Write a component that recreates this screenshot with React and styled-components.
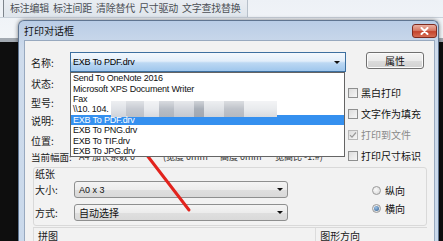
import React from "react"
import styled, { createGlobalStyle } from "styled-components"

const CJK = `"Noto Sans CJK SC", "Liberation Sans", sans-serif`
const LATIN = `"Liberation Sans", "Noto Sans CJK SC", sans-serif`

const GlobalStyle = createGlobalStyle`
  html, body { margin: 0; padding: 0; }
  body { font-family: ${CJK}; background: #0d0d0d; }
`

const Screen = styled.div`
  position: relative;
  width: 443px;
  height: 241px;
  overflow: hidden;
  display: flex;
  flex-direction: column;
  background: #0d0d0d;
`

// app window behind the dialog
const Ribbon = styled.div`
  display: flex;
  flex-direction: column;
  background: linear-gradient(#edf1f6, #f3f6f9);
`
const RibbonTop = styled.div`
  height: 17px;
  display: flex;
  border-bottom: 1px solid #c9d1da;
`
const RibbonGroup = styled.div`
  width: 237px;
  margin-left: 3px;
  padding-left: 6px;
  border-left: 1px solid #7d848c;
  border-right: 1px solid #b7c0ca;
  background: linear-gradient(#e9edf2, #dfe5ec);
  font-size: 10px;
  line-height: 15px;
  letter-spacing: -0.25px;
  word-spacing: 2px;
  color: #4b4f55;
  white-space: nowrap;
  overflow: hidden;
`
const RibbonFill = styled.div`
  height: 20px;
`
const RibbonBand = styled.div`
  height: 4px;
  background: #a3aab2;
`
const Canvas = styled.div`
  flex: 1;
  background: #0e0e0e;
`

// dialog window
const Dialog = styled.div`
  position: absolute;
  left: 18px;
  top: 20px;
  width: 421px;
  height: 221px;
  box-sizing: border-box;
  border: 1px solid #5f7591;
  border-bottom: 0;
  border-radius: 6px 6px 0 0;
  background: linear-gradient(#b9cde6, #cfdcec 30px, #cad9eb);
  display: flex;
  flex-direction: column;
  box-shadow: 0 0 4px rgba(0, 0, 0, 0.5);
`
const TitleBar = styled.div`
  height: 19px;
  display: flex;
  align-items: center;
  padding-left: 5px;
  padding-right: 1px;
  font-size: 10px;
  color: #111;
`
const CloseButton = styled.div`
  margin-left: auto;
  width: 25px;
  height: 14px;
  box-sizing: border-box;
  border: 1px solid #7e2a1f;
  border-radius: 3px;
  background: linear-gradient(#eab0a2, #d77a66 45%, #c4442d 55%, #d66e55);
  display: flex;
  align-items: center;
  justify-content: center;
`
const Frame = styled.div`
  flex: 1;
  min-height: 0;
  padding: 0 3px 0 5px;
  display: flex;
`
const Body = styled.div`
  flex: 1;
  border: 1px solid #98a9bf;
  border-bottom: 0;
  background: #f2f2f2;
  padding: 11px 0 0 6px;
  display: flex;
  flex-direction: column;
`

const TopSection = styled.div`
  display: flex;
  height: 114px;
  flex: none;
`
const LeftCol = styled.div`
  width: 315px;
  display: flex;
  flex-direction: column;
`
const RightCol = styled.div`
  margin-left: 2px;
  display: flex;
  flex-direction: column;
`
const FieldRow = styled.div`
  height: ${(p) => p.$h}px;
  display: flex;
  align-items: center;
  position: relative;
`
const Label = styled.div`
  width: ${(p) => p.$w || 39}px;
  flex: none;
  font-size: ${(p) => p.$size || 10}px;
  color: #1a1a1a;
  white-space: nowrap;
`

const NameCombo = styled.div`
  position: relative;
  width: 276px;
  height: 20px;
  box-sizing: border-box;
  border: 1px solid #3c6f9f;
  background: linear-gradient(#f3f8fd, #e2eefa 45%, #bcd8f3 55%, #9fc6ec);
  display: flex;
  align-items: center;
  padding: 0 5px 0 2px;
  font-family: ${LATIN};
  font-size: 9px;
  letter-spacing: -0.2px;
  color: #000;
`
const Arrow = styled.span`
  margin-left: auto;
  width: 0;
  height: 0;
  border-left: 3px solid transparent;
  border-right: 3px solid transparent;
  border-top: 3px solid #111;
`
const DropList = styled.div`
  position: absolute;
  left: -1px;
  top: 19px;
  width: 275px;
  height: 85px;
  box-sizing: border-box;
  border: 1px solid #646464;
  background: #fff;
  z-index: 2;
`
const ListItem = styled.div`
  height: 10.4px;
  display: flex;
  align-items: center;
  padding-left: 2px;
  font-family: ${LATIN};
  font-size: 9px;
  letter-spacing: -0.2px;
  white-space: nowrap;
  color: ${(p) => (p.$active ? "#fff" : "#111")};
  background: ${(p) => (p.$active ? "#3590ef" : "transparent")};
`
const Mosaic = styled.span`
  flex: none;
  width: 166px;
  height: 16px;
  margin-left: 2px;
  background:
    linear-gradient(rgba(255, 255, 255, 0.45), rgba(255, 255, 255, 0) 50%, rgba(120, 126, 136, 0.15)),
    linear-gradient(90deg, #dfe2e7 0 9%, #c7cbd2 9% 20%, #e8eaee 20% 29%, #b9bec6 29% 38%, #d3d6dc 38% 50%, #a9afb8 50% 56%, #dfe2e6 56% 68%, #bfc3ca 68% 80%, #e9ebee 80% 100%);
`

const CurrentSize = styled.div`
  display: grid;
  grid-template-columns: 13px 71px 57px 55px auto;
  font-size: 9px;
  line-height: 12px;
  color: #333;
  white-space: nowrap;
`

const PropButton = styled.div`
  margin-left: 18px;
  width: 58px;
  height: 17px;
  box-sizing: border-box;
  border: 1px solid #707070;
  border-radius: 3px;
  background: linear-gradient(#f4f4f4, #ebebeb 50%, #dcdcdc 51%, #d2d2d2);
  box-shadow: inset 0 0 0 1px #fbfbfb;
  display: flex;
  align-items: center;
  justify-content: center;
  font-size: 10px;
  color: #111;
`
const CheckList = styled.div`
  margin-top: 13px;
  display: flex;
  flex-direction: column;
`
const CheckRow = styled.div`
  height: 21px;
  display: flex;
  align-items: center;
  font-size: 10px;
  color: ${(p) => (p.$disabled ? "#8a8a8a" : "#111")};
`
const Box = styled.span`
  width: 10px;
  height: 10px;
  box-sizing: border-box;
  border: 1px solid ${(p) => (p.$disabled ? "#b8b8b8" : "#8e8f8f")};
  background: linear-gradient(135deg, #dcdcdc, #f6f6f6);
  margin-right: 3px;
  display: flex;
  align-items: center;
  justify-content: center;
`

const Group = styled.div`
  margin: 1px 0 0 2px;
  width: 394px;
  height: 59px;
  flex: none;
  box-sizing: border-box;
  border: 1px solid #d9d9d9;
  border-radius: 3px;
  display: flex;
  padding-left: 1px;
`
const GroupLeft = styled.div`
  display: flex;
  flex-direction: column;
`
const Legend = styled.div`
  height: 12px;
  font-size: 10px;
  line-height: 12px;
  color: #1a1a1a;
`
const SelectRow = styled.div`
  display: flex;
  align-items: center;
  margin-top: ${(p) => p.$mt}px;
  height: 17px;
`
const Select = styled.div`
  width: 214px;
  height: 17px;
  box-sizing: border-box;
  border: 1px solid #8e8f8f;
  border-radius: 3px;
  background: linear-gradient(#f4f4f4, #ececec 50%, #dfdfdf 51%, #d9d9d9);
  display: flex;
  align-items: center;
  padding: 0 4px;
  font-family: ${(p) => (p.$latin ? LATIN : CJK)};
  font-size: ${(p) => (p.$latin ? 9 : 10)}px;
  color: #111;
`
const RadioCol = styled.div`
  margin: 13px 0 0 84px;
  display: flex;
  flex-direction: column;
`
const RadioRow = styled.div`
  height: 18px;
  display: flex;
  align-items: center;
  font-size: 10px;
  color: #111;
`
const Radio = styled.span`
  width: 9px;
  height: 9px;
  box-sizing: border-box;
  border-radius: 50%;
  border: 1px solid #9a9a9a;
  background: radial-gradient(circle at 40% 40%, #fafafa, #d4d4d4);
  margin-right: 4px;
  display: flex;
  align-items: center;
  justify-content: center;
  &::after {
    content: "";
    width: 5px;
    height: 5px;
    border-radius: 50%;
    display: ${(p) => (p.$on ? "block" : "none")};
    background: radial-gradient(circle at 40% 35%, #9fc3e6, #2a5a8e);
  }
`

const BottomRow = styled.div`
  margin: 1px 0 0 2px;
  width: 394px;
  display: flex;
  flex: 1;
  min-height: 0;
  border-top: 1px solid #d9d9d9;
`
const Panel = styled.div`
  width: ${(p) => p.$w}px;
  padding: 2px 0 0 4px;
  font-size: 10px;
  line-height: 11px;
  color: #1a1a1a;
  border-left: 1px solid #dcdcdc;
  margin-left: ${(p) => p.$ml || 0}px;
`

const Overlay = styled.svg`
  position: absolute;
  left: 0;
  top: 0;
  pointer-events: none;
`

const printers = [
  "Send To OneNote 2016",
  "Microsoft XPS Document Writer",
  "Fax",
  "\\\\10. 104.",
  "EXB To PDF.drv",
  "EXB To PNG.drv",
  "EXB To TIF.drv",
  "EXB To JPG.drv",
]

const checks = [
  { text: "黑白打印" },
  { text: "文字作为填充" },
  { text: "打印到文件", disabled: true, checked: true },
  { text: "打印尺寸标识" },
]

export default function App() {
  return (
    <Screen>
      <GlobalStyle />
      <Ribbon>
        <RibbonTop>
          <RibbonGroup>标注编辑 标注间距 清除替代 尺寸驱动 文字查找替换</RibbonGroup>
        </RibbonTop>
        <RibbonFill />
        <RibbonBand />
      </Ribbon>
      <Canvas />

      <Dialog>
        <TitleBar>
          打印对话框
          <CloseButton>
            <svg width="9" height="8" viewBox="0 0 9 8">
              <path d="M1.5 1 L7.5 7 M7.5 1 L1.5 7" stroke="#fff" strokeWidth="2" strokeLinecap="round" />
            </svg>
          </CloseButton>
        </TitleBar>
        <Frame>
          <Body>
            <TopSection>
              <LeftCol>
                <FieldRow $h={20}>
                  <Label>名称:</Label>
                  <NameCombo>
                    EXB To PDF.drv
                    <Arrow />
                    <DropList>
                      {printers.map((p, i) => (
                        <ListItem key={p} $active={i === 4}>
                          {p}
                          {i === 3 && <Mosaic />}
                        </ListItem>
                      ))}
                    </DropList>
                  </NameCombo>
                </FieldRow>
                <FieldRow $h={22}><Label>状态:</Label></FieldRow>
                <FieldRow $h={16}><Label>型号:</Label></FieldRow>
                <FieldRow $h={20}><Label>说明:</Label></FieldRow>
                <FieldRow $h={20}><Label>位置:</Label></FieldRow>
                <FieldRow $h={14}>
                  <Label $w={48} $size={9.5}>当前幅面:</Label>
                  <CurrentSize>
                    <span>A4</span>
                    <span>加长系数 0</span>
                    <span>(宽度 0mm</span>
                    <span>高度 0mm</span>
                    <span>宽高比 -1:#)</span>
                  </CurrentSize>
                </FieldRow>
              </LeftCol>
              <RightCol>
                <PropButton>属性</PropButton>
                <CheckList>
                  {checks.map((c) => (
                    <CheckRow key={c.text} $disabled={c.disabled}>
                      <Box $disabled={c.disabled}>
                        {c.checked && (
                          <svg width="8" height="8" viewBox="0 0 8 8">
                            <path d="M1 4.2 L3 6.2 L7 1.5" fill="none" stroke="#9a9a9a" strokeWidth="1.2" />
                          </svg>
                        )}
                      </Box>
                      {c.text}
                    </CheckRow>
                  ))}
                </CheckList>
              </RightCol>
            </TopSection>

            <Group>
              <GroupLeft>
                <Legend>纸张</Legend>
                <SelectRow $mt={1}>
                  <Label>大小:</Label>
                  <Select $latin>A0 x 3<Arrow /></Select>
                </SelectRow>
                <SelectRow $mt={6}>
                  <Label>方式:</Label>
                  <Select>自动选择<Arrow /></Select>
                </SelectRow>
              </GroupLeft>
              <RadioCol>
                <RadioRow><Radio />纵向</RadioRow>
                <RadioRow><Radio $on />横向</RadioRow>
              </RadioCol>
            </Group>

            <BottomRow>
              <Panel $w={278}>拼图</Panel>
              <Panel $w={108} $ml={2}>图形方向</Panel>
            </BottomRow>
          </Body>
        </Frame>
      </Dialog>

      <Overlay width="443" height="241" viewBox="0 0 443 241">
        <line x1="189" y1="210" x2="133" y2="137" stroke="#e2231d" strokeWidth="3" strokeLinecap="round" />
        <polygon points="123,123 139,134 129,141.5" fill="#e2231d" />
      </Overlay>
    </Screen>
  )
}
